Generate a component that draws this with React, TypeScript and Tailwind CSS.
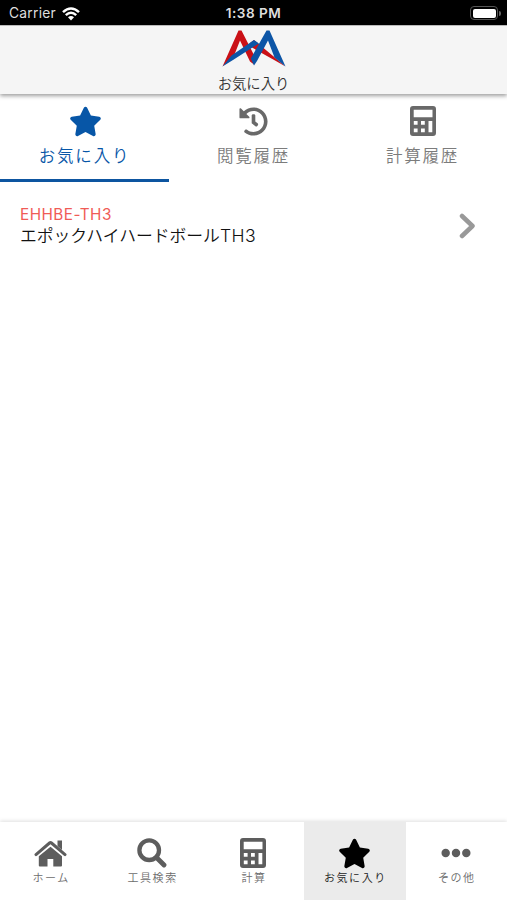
import React from "react";
import { FaEllipsisH, FaHistory, FaStar } from "react-icons/fa";

function CalculatorIcon({ className }: { className?: string }) {
  return (
    <svg viewBox="0 0 26 30" className={className} fill="currentColor" fillRule="evenodd">
      <path d="M3 0H23a3 3 0 0 1 3 3V27a3 3 0 0 1-3 3H3a3 3 0 0 1-3-3V3a3 3 0 0 1 3-3ZM3.7 3.7V11.2H22.5V3.7ZM3.8 15V18.8H7.6V15ZM11 15V18.8H14.8V15ZM3.8 22.5V26.3H7.6V22.5ZM11 22.5V26.3H14.8V22.5ZM18.5 15V26.3H22.3V15Z" />
    </svg>
  );
}

function HomeIcon() {
  return (
    <svg viewBox="0 0 33 27" className="h-[27px] w-[33px]" fill="currentColor">
      <path d="M23.5.5H28V10L23.5 6Z" />
      <path d="M2 14.6 15.5 3Q16.5 2.2 17.5 3L31 14.6" fill="none" stroke="currentColor" strokeWidth="3" strokeLinecap="round" />
      <path d="M4.8 16.2 16.5 6.8 28 16.2V25.5Q28 26.5 27 26.5H19.3V19H13.5V26.5H5.8Q4.8 26.5 4.8 25.5Z" />
    </svg>
  );
}

function SearchIcon() {
  return (
    <svg viewBox="0 0 30 30" className="size-[30px]" fill="none" stroke="currentColor">
      <circle cx="12.2" cy="12.2" r="9.8" strokeWidth="4.3" />
      <path d="M19.5 19.5 27 27" strokeWidth="4.8" strokeLinecap="round" />
    </svg>
  );
}

function StatusBar() {
  return (
    <div className="grid h-[25px] shrink-0 grid-cols-3 items-center bg-black font-['Inter','Liberation_Sans',sans-serif] text-[#dedede]">
      <div className="flex items-center gap-[6px] pt-[2px] pl-[9px] leading-none">
        <span className="w-[47px] text-[13.8px] tracking-[0.25px] whitespace-nowrap">Carrier</span>
        <svg viewBox="0 0 18 14" className="h-[14px] w-[18px]" fill="none" stroke="#fff" strokeWidth="2.5">
          <path d="M1 5.2Q9-2.3 17 5.2M3.8 8.2Q9 3.4 14.2 8.2" />
          <path d="M6 10.3Q9 7.8 12 10.3L9 13.5Z" fill="#fff" stroke="none" />
        </svg>
      </div>
      <span className="pt-[3px] text-center text-[13.6px] leading-none font-semibold tracking-[0.5px]">1:38 PM</span>
      <div className="flex items-center justify-end pt-px pr-[6px]">
        <div className="h-[14px] w-[28px] rounded-[4px] border-[1.5px] border-[#555] p-[1.5px]">
          <div className="h-full rounded-[2px] bg-white" />
        </div>
        <div className="ml-px h-[5px] w-[2px] rounded-r bg-[#666]" />
      </div>
    </div>
  );
}

function Header() {
  return (
    <header className="z-10 flex h-[69px] shrink-0 flex-col items-center border-t border-[#bbb] bg-[#f5f5f5] pt-[4px] shadow-[0_2px_4px_rgba(0,0,0,0.38)]">
      <svg viewBox="0 0 64 37" className="h-[37px] w-[64px]">
        <path d="M.5 36.5 16.5.5H19.5L34 29 32 34.5 28 31.5 18 10.5 11.5 27Z" fill="#ca1016" />
        <path d="M28 13 32 10 63.5 36.5 53 30.5 30 17.5Z" fill="#ca1016" />
        <path d="M.5 36.5 9.5 25.5 32 10 37 13.5 32 16.5 11 30Z" fill="#0d55a6" />
        <path d="M32 35.5 28.8 28.5 44.5.5H47.5L63.5 36.5 52.5 27.5 46 10.5 35 31Z" fill="#0d55a6" />
      </svg>
      <h1 className="mt-[7px] text-[14.3px] leading-[20px] font-[350] text-[#333]">お気に入り</h1>
    </header>
  );
}

const tabs = [
  { label: "お気に入り", icon: <FaStar className="size-[33px]" />, active: true },
  { label: "閲覧履歴", icon: <FaHistory className="size-[29px]" /> },
  { label: "計算履歴", icon: <CalculatorIcon className="h-[30px] w-[26px]" /> },
];

const items = [
  { label: "ホーム", icon: <HomeIcon /> },
  { label: "工具検索", icon: <SearchIcon /> },
  { label: "計算", icon: <CalculatorIcon className="h-[30px] w-[26px]" /> },
  { label: "お気に入り", icon: <FaStar className="size-[33px]" />, active: true },
  { label: "その他", icon: <FaEllipsisH className="size-[30px]" /> },
];

export default function App() {
  return (
    <div className="flex h-[900px] w-[507px] flex-col overflow-hidden bg-white font-['Inter','Noto_Sans_CJK_JP',sans-serif]">
      <StatusBar />
      <Header />
      <nav className="grid h-[88px] shrink-0 grid-cols-3">
        {tabs.map((t) => (
          <div
            key={t.label}
            className={`flex flex-col items-center border-b-[3px] pt-[11px] ${t.active ? "border-[#0d55a0] pl-[2px] text-[#0756a7]" : "border-transparent text-[#696969]"}`}
          >
            <div className="flex h-[32px] items-center">{t.icon}</div>
            <span className={`mt-[7px] text-[16.5px] leading-[24px] font-[350] tracking-[1.8px] ${t.active ? "-ml-[2px]" : "text-[#7c7c7c]"}`}>{t.label}</span>
          </div>
        ))}
      </nav>
      <main className="flex-1">
        <div className="flex h-[88px] items-center justify-between pr-[31px] pl-[20px]">
          <div className="-mt-px">
            <div className="text-[15.3px] leading-[20px] tracking-[0.45px] text-[#f05b56]">EHHBE-TH3</div>
            <div className="text-[16.8px] leading-[22px] font-[350] text-[#111]">
              エポックハイハードボール<span className="text-[17.6px] tracking-[0.4px]">TH3</span>
            </div>
          </div>
          <svg viewBox="0 0 17 26" className="h-[26px] w-[17px]" fill="none" stroke="#999" strokeWidth="4.5" strokeLinecap="round" strokeLinejoin="round">
            <path d="M3 3 13.5 13 3 23" />
          </svg>
        </div>
      </main>
      <nav className="grid h-[78px] shrink-0 grid-cols-5 shadow-[0_-1px_4px_rgba(0,0,0,0.13)]">
        {items.map((t) => (
          <div key={t.label} className={`flex flex-col items-center pt-[15px] ${t.active ? "bg-[#ebebeb] text-black" : "text-[#5d5d5d]"}`}>
            <div className="flex h-[32px] items-center">{t.icon}</div>
            <span className={`mt-px pl-px text-[11px] leading-[16px] font-[350] tracking-[1.6px] ${t.active ? "text-[#222]" : "text-[#6c6c6c]"}`}>{t.label}</span>
          </div>
        ))}
      </nav>
    </div>
  );
}
